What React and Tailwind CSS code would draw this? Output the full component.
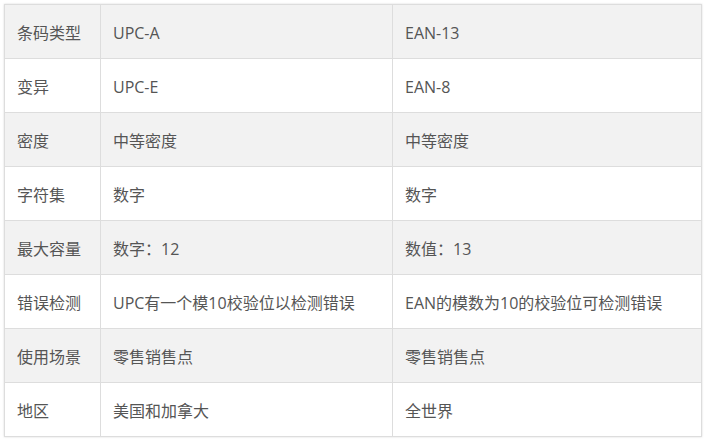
import React from 'react';

const rows = [
  ['条码类型', 'UPC-A', 'EAN-13'],
  ['变异', 'UPC-E', 'EAN-8'],
  ['密度', '中等密度', '中等密度'],
  ['字符集', '数字', '数字'],
  ['最大容量', '数字：12', '数值：13'],
  ['错误检测', 'UPC有一个模10校验位以检测错误', 'EAN的模数为10的校验位可检测错误'],
  ['使用场景', '零售销售点', '零售销售点'],
  ['地区', '美国和加拿大', '全世界'],
];

export default function App() {
  return (
    <div className="w-[707px] h-[444px] bg-white pt-1 pl-1">
      <table
        className="table-fixed border-collapse w-[697px] text-[16px] text-[#555] shadow-[0_0_2px_rgba(0,0,0,0.15)]"
        style={{ fontFamily: '"Open Sans", "Noto Sans CJK SC", sans-serif' }}
      >
        <colgroup>
          <col className="w-[96px]" />
          <col className="w-[292px]" />
          <col className="w-[309px]" />
        </colgroup>
        <tbody>
          {rows.map((row, idx) => (
            <tr key={idx} className={idx % 2 === 0 ? 'bg-[#f2f2f2]' : 'bg-white'}>
              {row.map((cell, j) => (
                <td key={j} className="h-[54px] border border-[#dddddd] px-3 pt-[2px] align-middle leading-6 whitespace-nowrap">
                  {cell}
                </td>
              ))}
            </tr>
          ))}
        </tbody>
      </table>
    </div>
  );
}
